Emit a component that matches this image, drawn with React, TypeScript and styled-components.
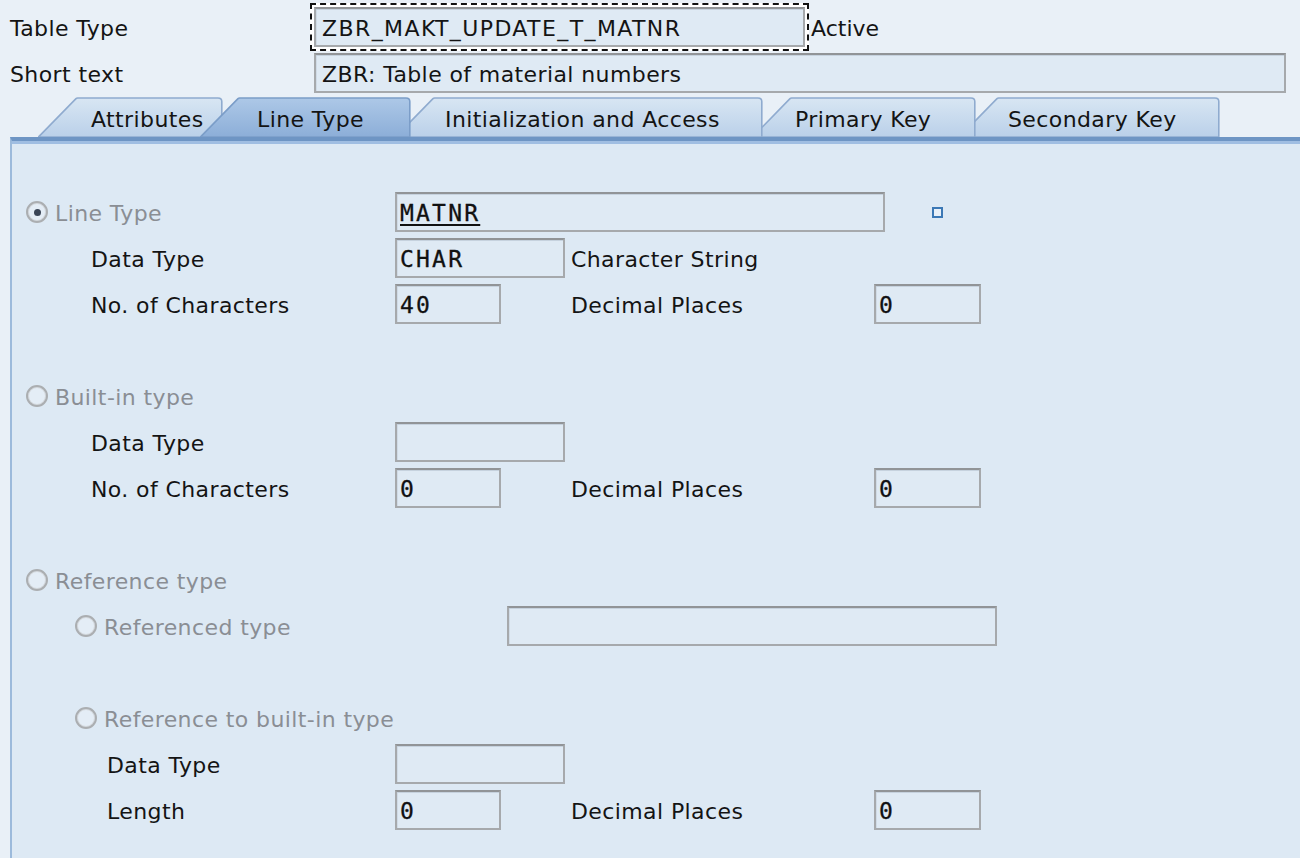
import React from "react";
import styled, { createGlobalStyle, css } from "styled-components";

const Global = createGlobalStyle`
  html, body { margin: 0; padding: 0; background: #e9f0f7; }
  body {
    font-family: "DejaVu Sans", Verdana, sans-serif;
    font-size: 22px;
    letter-spacing: 0.4px;
    color: #141414;
  }
  * { box-sizing: border-box; }
`;

const Page = styled.div`
  display: flex;
  flex-direction: column;
  height: 858px;
  overflow: hidden;
  background: #e9f0f7;
`;

const HeaderRow = styled.div<{ $top: number }>`
  display: flex;
  align-items: center;
  margin-top: ${(p) => p.$top}px;
`;

const HeaderLabel = styled.div<{ $w: number }>`
  flex: none;
  width: ${(p) => p.$w}px;
  padding-left: 10px;
  padding-top: 2px;
  white-space: nowrap;
`;

const FocusFrame = styled.div`
  display: flex;
  flex: none;
  border: 2px dashed #111;
  background: #fff;
  padding: 2px;
`;

const HeaderField = styled.div<{ $w: number; $ls?: number }>`
  flex: none;
  width: ${(p) => p.$w}px;
  height: 40px;
  display: flex;
  align-items: center;
  padding: 2px 0 0 6px;
  border: 2px solid #a6a9ac;
  border-top-color: #919497;
  background: #dfeaf4;
  box-shadow: inset 0 1px 0 #c6d2de, inset 1px 0 0 #d0dbe6;
  letter-spacing: ${(p) => p.$ls ?? 0.4}px;
  white-space: nowrap;
  overflow: hidden;
`;

const Status = styled.span`
  margin-left: 2px;
  padding-top: 2px;
  letter-spacing: 0;
`;

const TabStrip = styled.div`
  display: flex;
  height: 40px;
  margin-top: 4px;
  padding-left: 38px;
`;

const TabItem = styled.div<{ $w: number; $ml: number; $z: number; $pad: number }>`
  position: relative;
  flex: none;
  display: flex;
  align-items: center;
  width: ${(p) => p.$w}px;
  height: 40px;
  margin-left: ${(p) => p.$ml}px;
  padding-left: ${(p) => p.$pad}px;
  padding-top: 4px;
  z-index: ${(p) => p.$z};
  white-space: nowrap;
  & > svg {
    position: absolute;
    left: 0;
    top: 0;
  }
`;

const TabText = styled.span`
  position: relative;
`;

const Panel = styled.div`
  flex: 1;
  margin-left: 10px;
  background: #dde9f4;
  border-left: 2px solid #9cbadb;
  border-top: 4px solid #6e95c4;
  box-shadow: inset 0 3px 0 #a0bee2;
  padding-top: 51px;
`;

const Row = styled.div`
  display: flex;
  align-items: center;
  height: 40px;
  margin-bottom: 6px;
`;

const Spacer = styled.div`
  height: 46px;
`;

const Lead = styled.div<{ $w?: number; $indent: number }>`
  flex: none;
  display: flex;
  align-items: center;
  width: ${(p) => p.$w ?? 383}px;
  padding-left: ${(p) => p.$indent}px;
  padding-top: 3px;
  white-space: nowrap;
`;

const Mid = styled.div`
  flex: none;
  display: flex;
  width: 176px;
`;

const Side = styled.div`
  flex: none;
  width: 303px;
  padding-top: 3px;
  white-space: nowrap;
`;

const Field = styled.div<{ $w: number }>`
  flex: none;
  width: ${(p) => p.$w}px;
  height: 40px;
  display: flex;
  align-items: center;
  padding: 2px 0 0 3px;
  border: 2px solid #a6a9ac;
  border-top-color: #919497;
  background: #dfeaf4;
  box-shadow: inset 0 1px 0 #c6d2de, inset 1px 0 0 #d0dbe6;
  font-family: "DejaVu Sans Mono", "Liberation Mono", monospace;
  font-size: 23px;
  letter-spacing: 2.2px;
  white-space: nowrap;
  overflow: hidden;
  color: #111;
  -webkit-text-stroke: 0.3px #111;
`;

const Linked = styled.span`
  text-decoration: underline;
  text-decoration-thickness: 2px;
  text-underline-offset: 3px;
`;

const RadioDot = styled.span<{ $on?: boolean }>`
  position: relative;
  flex: none;
  width: 22px;
  height: 22px;
  margin-top: -3px;
  border-radius: 50%;
  border: 2px solid #abaeb1;
  background: #e4edf6;
  box-shadow: inset 0 0 0 1px #d3d7db;
  ${(p) =>
    p.$on &&
    css`
      &::after {
        content: "";
        position: absolute;
        left: 50%;
        top: 50%;
        width: 7px;
        height: 7px;
        margin: -3.5px 0 0 -3.5px;
        border-radius: 50%;
        background: #3a4556;
      }
    `}
`;

const RadioLabel = styled.span`
  margin-left: 7px;
  color: #8a8e94;
`;

const Marker = styled.span`
  flex: none;
  width: 11px;
  height: 11px;
  margin-left: 47px;
  border: 2px solid #3b78b5;
  background: #e8f0f8;
`;

type TabDef = { label: string; w: number; ml: number; z: number; pad: number; active?: boolean };

const tabs: TabDef[] = [
  { label: "Attributes", w: 185, ml: 0, z: 5, pad: 53 },
  { label: "Line Type", w: 211, ml: -23, z: 10, pad: 57, active: true },
  { label: "Initialization and Access", w: 368, ml: -16, z: 4, pad: 50 },
  { label: "Primary Key", w: 224, ml: -11, z: 3, pad: 43 },
  { label: "Secondary Key", w: 261, ml: -17, z: 2, pad: 49 },
];

function TabShape({ w, active, id }: { w: number; active?: boolean; id: string }) {
  const top = active ? "#adc8e7" : "#d8e6f3";
  const bottom = active ? "#8caed8" : "#bad0e9";
  const stroke = active ? "#7b9dc8" : "#8fabcf";
  return (
    <svg width={w} height={40} viewBox={`0 0 ${w} 40`}>
      <defs>
        <linearGradient id={id} x1="0" y1="0" x2="0" y2="1">
          <stop offset="0" stopColor={top} />
          <stop offset="1" stopColor={bottom} />
        </linearGradient>
      </defs>
      <path
        d={`M0.5 40 L38 1.6 Q38.6 1 39.6 1 L${w - 5} 1 Q${w - 1.2} 1 ${w - 1.2} 4.5 L${w - 1.2} 40 Z`}
        fill={`url(#${id})`}
        stroke={stroke}
        strokeWidth={1.6}
      />
    </svg>
  );
}

function NumRow({ label, indent, left, right }: { label: string; indent: number; left: string; right: string }) {
  return (
    <Row>
      <Lead $indent={indent}>{label}</Lead>
      <Mid>
        <Field $w={106}>{left}</Field>
      </Mid>
      <Side>Decimal Places</Side>
      <Field $w={107}>{right}</Field>
    </Row>
  );
}

export default function App() {
  return (
    <>
      <Global />
      <Page>
        <HeaderRow $top={3}>
          <HeaderLabel $w={310}>Table Type</HeaderLabel>
          <FocusFrame>
            <HeaderField $w={491} $ls={1.4}>ZBR_MAKT_UPDATE_T_MATNR</HeaderField>
          </FocusFrame>
          <Status>Active</Status>
        </HeaderRow>
        <HeaderRow $top={2}>
          <HeaderLabel $w={314}>Short text</HeaderLabel>
          <HeaderField $w={972}>ZBR: Table of material numbers</HeaderField>
        </HeaderRow>

        <TabStrip>
          {tabs.map((t, i) => (
            <TabItem key={t.label} $w={t.w} $ml={t.ml} $z={t.z} $pad={t.pad}>
              <TabShape w={t.w} active={t.active} id={`tabgrad${i}`} />
              <TabText>{t.label}</TabText>
            </TabItem>
          ))}
        </TabStrip>

        <Panel>
          <Row>
            <Lead $indent={14}>
              <RadioDot $on />
              <RadioLabel>Line Type</RadioLabel>
            </Lead>
            <Field $w={490}>
              <Linked>MATNR</Linked>
            </Field>
            <Marker />
          </Row>
          <Row>
            <Lead $indent={79}>Data Type</Lead>
            <Mid>
              <Field $w={170}>CHAR</Field>
            </Mid>
            <Side>Character String</Side>
          </Row>
          <NumRow label="No. of Characters" indent={79} left="40" right="0" />
          <Spacer />

          <Row>
            <Lead $indent={14}>
              <RadioDot />
              <RadioLabel>Built-in type</RadioLabel>
            </Lead>
          </Row>
          <Row>
            <Lead $indent={79}>Data Type</Lead>
            <Mid>
              <Field $w={170} />
            </Mid>
          </Row>
          <NumRow label="No. of Characters" indent={79} left="0" right="0" />
          <Spacer />

          <Row>
            <Lead $indent={14}>
              <RadioDot />
              <RadioLabel>Reference type</RadioLabel>
            </Lead>
          </Row>
          <Row>
            <Lead $indent={63} $w={495}>
              <RadioDot />
              <RadioLabel>Referenced type</RadioLabel>
            </Lead>
            <Field $w={490} />
          </Row>
          <Spacer />
          <Row>
            <Lead $indent={63}>
              <RadioDot />
              <RadioLabel>Reference to built-in type</RadioLabel>
            </Lead>
          </Row>
          <Row>
            <Lead $indent={95}>Data Type</Lead>
            <Mid>
              <Field $w={170} />
            </Mid>
          </Row>
          <NumRow label="Length" indent={95} left="0" right="0" />
        </Panel>
      </Page>
    </>
  );
}
